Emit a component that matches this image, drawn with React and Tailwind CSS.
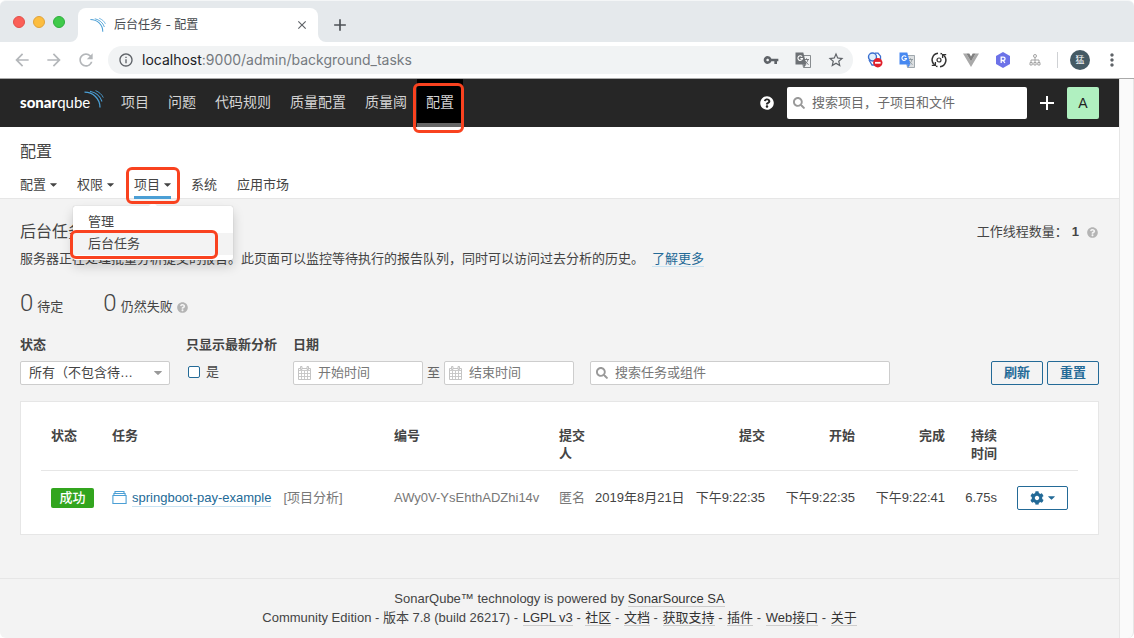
import React from 'react';
import {
  MdArrowBack,
  MdArrowForward,
  MdRefresh,
  MdInfoOutline,
  MdVpnKey,
  MdStarBorder,
  MdMoreVert,
  MdClose,
  MdAdd,
} from 'react-icons/md';
import { FaQuestionCircle, FaSearch, FaCog } from 'react-icons/fa';

function Waves({ className }) {
  return (
    <svg viewBox="0 0 20 18" fill="none" stroke="#4b9fd5" aria-hidden="true" className={className}>
      <path d="M.5 2.2C9 2.2 16 8.500 16 17.500" strokeWidth="1.300" />
      <path d="M6 1.200C11.500 2.300 16.300 6 18 11.500" strokeWidth="1.100" />
      <path d="M11.500.6C15 2 17.800 4.300 19.300 7.600" strokeWidth=".9" />
    </svg>
  );
}

function Caret({ className }) {
  return (
    <svg viewBox="0 0 8 4" fill="currentColor" aria-hidden="true" className={className}>
      <path d="M.6 0h6.800a.4.4 0 0 1 .3.700L4.400 3.800a.6.6 0 0 1-.8 0L.3.700A.4.4 0 0 1 .6 0z" />
    </svg>
  );
}

function Calendar() {
  return (
    <svg width="13" height="14" viewBox="0 0 13 14" fill="none" stroke="#c4c4c4" aria-hidden="true" className="shrink-0">
      <path d="M.5 2.500h12v11H.5z" />
      <path d="M0 4.500h13M3.500 5v8.500M6.500 5v8.500M9.500 5v8.500M.5 7.500h12M.5 10.500h12" strokeWidth=".9" />
      <path d="M2.500.5h1.500v3H2.500zM9 .5h1.500v3H9z" fill="#f3f3f3" />
    </svg>
  );
}

function GTranslate({ front, back, ink }) {
  return (
    <svg width="16" height="16" viewBox="0 0 16 16" aria-hidden="true">
      <path d="M6 3.500h9.500v12H8.500z" fill={back} stroke={ink} strokeWidth=".8" />
      <path d="M9 7.500h5M11.500 6.300v1.200M13 7.500c-.6 2.500-2 4-3.800 5M10 8.800c.8 1.700 2 2.900 3.600 3.700" stroke={ink} strokeWidth=".9" fill="none" />
      <path d="M.5.5h7.800l3 12H.5z" fill={front} />
      <path d="M7.100 4.700A2.300 2.300 0 1 0 7.500 6.500H5.400" stroke="#fff" strokeWidth="1.100" fill="none" />
      <path d="M8 12.500h3.300L9 15.500z" fill={front} />
    </svg>
  );
}

function Mark({ className }) {
  return <span aria-hidden="true" className={`pointer-events-none absolute z-20 rounded-md border-[3px] border-[#f9421f] ${className}`} />;
}

function Foot({ flip }) {
  return (
    <svg width="8" height="8" viewBox="0 0 8 8" fill="#fff" aria-hidden="true" className="self-end">
      <path d={flip ? 'M0 0a8 8 0 0 0 8 8H0z' : 'M8 0a8 8 0 0 1-8 8h8z'} />
    </svg>
  );
}

function BrowserChrome() {
  return (
    <header className="font-['Inter','Noto_Sans_CJK_SC',sans-serif]">
      <div className="flex h-[42px] items-center rounded-t-md border-t border-[#f4f6f7] bg-[#e5e9ec]">
        <div className="flex w-[70px] shrink-0 gap-2 pl-[13px]">
          <span className="size-3 rounded-full border border-[#e2504a] bg-[#fb5f57]" />
          <span className="size-3 rounded-full border border-[#e0a33a] bg-[#fcbd3f]" />
          <span className="size-3 rounded-full border border-[#2eae3e] bg-[#3fca4a]" />
        </div>
        <Foot />
        <div className="flex h-[34px] w-60 shrink-0 items-center self-end rounded-t-lg bg-white pr-[9px] pl-3">
          <Waves className="h-4 w-4" />
          <span className="ml-2 flex-1 text-xs text-[#45494d]">后台任务 - 配置</span>
          <button type="button" aria-label="关闭标签页" className="text-[#5f6368]">
            <MdClose size={14} />
          </button>
        </div>
        <Foot flip />
        <button type="button" aria-label="新标签页" className="ml-1 mt-1.5 text-[#4d5156]">
          <MdAdd size={20} />
        </button>
      </div>
      <div className="flex h-9 items-center bg-white pl-3 pr-3">
        <div className="flex w-24 shrink-0 items-center gap-3 text-[#b4b7ba]">
          <button type="button" aria-label="后退"><MdArrowBack size={20} /></button>
          <button type="button" aria-label="前进"><MdArrowForward size={20} /></button>
          <button type="button" aria-label="重新加载"><MdRefresh size={20} /></button>
        </div>
        <div className="flex h-7 min-w-0 flex-1 items-center rounded-full bg-[#f1f3f4] pr-2 pl-2.5 text-[#5f6368]">
          <MdInfoOutline size={16} />
          <span className="ml-2 flex-1 truncate text-sm text-[#757a7f]">
            <span className="text-[#202124]">localhost</span>:9000/admin/background_tasks
          </span>
          <div className="flex items-center gap-4">
            <MdVpnKey size={16} />
            <GTranslate front="#6d7175" back="#f1f3f4" ink="#6d7175" />
            <MdStarBorder size={18} />
          </div>
        </div>
        <div className="ml-3.5 flex shrink-0 items-center gap-4">
          <svg width="16" height="16" viewBox="0 0 16 16" aria-hidden="true">
            <circle cx="5.500" cy="5" r="4" fill="#dff0fd" stroke="#3b6fd0" strokeWidth="1.400" />
            <path d="M8 1.200h3l2.500 3v3.500M2 8l3 5h4" fill="none" stroke="#3b6fd0" strokeWidth="1.300" />
            <circle cx="10.800" cy="10.800" r="4.700" fill="#e0202c" />
            <path d="M8 9.900h5.600v1.800H8z" fill="#fff" />
          </svg>
          <GTranslate front="#4688f1" back="#dcdfe1" ink="#8b969c" />
          <svg width="16" height="16" viewBox="0 0 16 16" fill="none" stroke="#333" strokeWidth="1.500" aria-hidden="true">
            <path d="M7 1.300A6.600 6.600 0 0 0 3.600 13M9 14.700A6.600 6.600 0 0 0 12.400 3" />
            <path d="M9.500 1.400a6.600 6.600 0 0 1 1.500.5M6.500 14.600a6.600 6.600 0 0 1-1.500-.5" />
            <path d="M.8 13.300h3.600V9.900M15.200 2.700h-3.600v3.400" strokeWidth="1.300" />
            <circle cx="8" cy="8" r="2" strokeWidth="1.200" />
          </svg>
          <svg width="16" height="16" viewBox="0 0 16 16" aria-hidden="true">
            <path d="M0 1.500h3.300L8 9.600l4.700-8.100H16L8 15z" fill="#a9a9a9" />
            <path d="M3.300 1.500h3L8 4.500l1.700-3h3L8 9.600z" fill="#808080" />
          </svg>
          <svg width="16" height="16" viewBox="0 0 16 16" aria-hidden="true">
            <path d="M8 0l7 4v8l-7 4-7-4V4z" fill="#6c72e8" />
            <path d="M6.200 11V5.200h2.200a1.600 1.600 0 0 1 0 3.300H6.200M8.200 8.500L9.900 11" fill="none" stroke="#fff" strokeWidth="1.300" />
          </svg>
          <svg width="16" height="16" viewBox="0 0 16 16" fill="none" stroke="#a3a3a3" aria-hidden="true">
            <circle cx="8" cy="4" r="1.500" />
            <path d="M8 5.500v4.500M4 10V8h8v2" />
            <path d="M3 10.500h2.200v2.500H3zM6.900 10.500h2.200v2.500H6.900zM10.800 10.500H13v2.500h-2.200z" />
          </svg>
        </div>
        <span className="ml-3.5 h-4 w-px bg-[#cfd1d4]" />
        <span className="ml-3 flex size-5 shrink-0 items-center justify-center rounded-full bg-[#455a64] text-[9px] text-white">猛</span>
        <button type="button" aria-label="更多" className="ml-3 text-[#5f6368]">
          <MdMoreVert size={20} />
        </button>
      </div>
    </header>
  );
}

const mainNav = ['项目', '问题', '代码规则', '质量配置', '质量阈', '配置'];

function GlobalNav() {
  return (
    <nav className="flex h-12 items-center bg-[#262626] px-5">
      <a href="#home" aria-label="sonarqube" className="relative block w-[92px] pb-0.5 font-['Lato',sans-serif] text-[15px] leading-6 text-white">
        <span className="font-black">sonar</span>
        <span>qube</span>
        <Waves className="absolute left-16 top-0 h-[18px] w-5" />
      </a>
      <ul className="flex h-full gap-px text-sm text-[#d4d4d4]">
        {mainNav.map((label) => {
          const active = label === '配置';
          return (
            <li key={label} className="relative">
              <a
                href={`#${label}`}
                className={
                  active
                    ? 'flex h-full items-center border-b-4 border-[#666] bg-black px-[9px] pt-0.5'
                    : 'flex h-full items-center border-b-4 border-transparent px-[9px] pt-0.5'
                }
              >
                {label}
              </a>
              {active && <Mark className="-bottom-1.5 -left-1 -right-px top-1" />}
            </li>
          );
        })}
      </ul>
      <div className="ml-auto flex items-center">
        <button type="button" aria-label="帮助" className="text-white"><FaQuestionCircle size={14} /></button>
        <label className="ml-[13px] flex h-8 w-60 items-center rounded-xs bg-white px-1.5 text-[#999]">
          <FaSearch size={12} className="shrink-0" />
          <input
            type="search"
            aria-label="搜索"
            placeholder="搜索项目，子项目和文件"
            className="ml-[7px] min-w-0 flex-1 text-[13px] outline-none placeholder:text-[#6a6a6a]"
          />
        </label>
        <button type="button" aria-label="新建" className="mx-3 text-white">
          <svg width="16" height="16" viewBox="0 0 16 16" fill="none" stroke="currentColor" strokeWidth="2" aria-hidden="true">
            <path d="M8 1v14M1 8h14" />
          </svg>
        </button>
        <button type="button" className="size-8 rounded-xs bg-[#b0f0c0] text-sm text-[#222]">A</button>
      </div>
    </nav>
  );
}

const tabs = [
  { label: '配置', menu: true },
  { label: '权限', menu: true },
  { label: '项目', menu: true, open: true },
  { label: '系统' },
  { label: '应用市场' },
];

function AdminNav() {
  return (
    <div className="flex h-[72px] flex-col border-b border-[#e6e6e6] bg-white px-5 pt-[13px]">
      <h1 className="text-base leading-6">配置</h1>
      <ul className="-mb-px mt-auto flex gap-5">
        {tabs.map((tab) => (
          <li key={tab.label} className="relative">
            <a
              href={`#${tab.label}`}
              className={
                tab.open
                  ? 'flex h-7 items-center gap-1 border-b-[3px] border-[#4b9fd5] pt-0.5'
                  : 'flex h-7 items-center gap-1 border-b-[3px] border-transparent pt-0.5'
              }
            >
              {tab.label}
              {tab.menu && <Caret className="h-1 w-[7px]" />}
            </a>
            {tab.open && (
              <>
                <Mark className="-bottom-[5px] -left-2 -right-[9px] -top-1" />
                <div className="absolute -left-[61px] top-[35px] z-10 w-40 rounded-xs bg-white py-[5px] shadow-[0_6px_12px_rgba(0,0,0,0.18),0_0_1px_rgba(0,0,0,0.3)]">
                  <svg width="10" height="5" viewBox="0 0 10 5" fill="#fff" aria-hidden="true" className="absolute -top-1 left-[75px]">
                    <path d="M0 5l5-5 5 5z" />
                  </svg>
                  <a href="#projects" className="block px-[15px] leading-[22px]">管理</a>
                  <a href="#background-tasks" className="relative block bg-[#f3f3f3] px-[15px] leading-[22px]">
                    后台任务
                    <Mark className="-bottom-1 -left-[3px] -top-[3px] right-[15px]" />
                  </a>
                </div>
              </>
            )}
          </li>
        ))}
      </ul>
    </div>
  );
}

function DateField({ id, label }) {
  return (
    <label htmlFor={id} className="flex h-6 w-[130px] items-center rounded-xs border border-[#cdcdcd] bg-white px-1">
      <Calendar />
      <input id={id} type="text" aria-label={label} placeholder={label} className="ml-[7px] min-w-0 flex-1 outline-none placeholder:text-[#777]" />
    </label>
  );
}

function Filters() {
  return (
    <div className="mt-3.5 flex items-end">
      <div className="w-[150px]">
        <label htmlFor="status" className="block font-bold leading-5">状态</label>
        <div className="relative mt-1.5">
          <select id="status" className="block h-6 w-full appearance-none rounded-xs border border-[#cdcdcd] bg-white px-2 outline-none">
            <option>所有（不包含待…</option>
          </select>
          <Caret className="pointer-events-none absolute right-2 top-2.5 h-1 w-2 text-[#999]" />
        </div>
      </div>
      <div className="ml-4">
        <span className="block font-bold leading-5">只显示最新分析</span>
        <label className="mt-1.5 flex h-6 items-center gap-1.5 pb-0.5 pl-0.5">
          <input type="checkbox" className="size-3 appearance-none rounded-xs border border-[#236a97] bg-white checked:bg-[#236a97]" />
          是
        </label>
      </div>
      <div className="ml-4">
        <span className="block font-bold leading-5">日期</span>
        <div className="mt-1.5 flex items-center gap-1">
          <DateField id="from" label="开始时间" />
          <span className="text-[#666]">至</span>
          <DateField id="to" label="结束时间" />
        </div>
      </div>
      <label htmlFor="task-search" className="ml-4 flex h-6 w-[300px] items-center rounded-xs border border-[#cdcdcd] bg-white px-[5px] text-[#999]">
        <FaSearch size={12} className="shrink-0" />
        <input id="task-search" type="search" aria-label="搜索任务或组件" placeholder="搜索任务或组件" className="ml-[7px] min-w-0 flex-1 outline-none placeholder:text-[#777]" />
      </label>
      <div className="ml-auto flex gap-1">
        <button type="button" className="h-6 w-[52px] rounded-xs border border-[#236a97] font-bold text-[#236a97]">刷新</button>
        <button type="button" className="h-6 w-[52px] rounded-xs border border-[#236a97] font-bold text-[#236a97]">重置</button>
      </div>
    </div>
  );
}

function Tasks() {
  return (
    <div className="mt-4 border border-[#e6e6e6] bg-white px-5 pb-3 pt-2.5">
      <table className="w-full table-fixed leading-[18px]">
        <colgroup>
          <col className="w-[61px]" />
          <col />
          <col className="w-[165px]" />
          <col className="w-[46px]" />
          <col className="w-[90px]" />
          <col className="w-[90px]" />
          <col className="w-[90px]" />
          <col className="w-[90px]" />
          <col className="w-[52px]" />
          <col className="w-[71px]" />
        </colgroup>
        <thead>
          <tr className="border-b border-[#e6e6e6] text-left align-top [&>th]:px-2.5 [&>th]:pb-[7px] [&>th]:pt-[15px]">
            <th>状态</th>
            <th>任务</th>
            <th>编号</th>
            <th>提交人</th>
            <th />
            <th className="text-right">提交</th>
            <th className="text-right">开始</th>
            <th className="text-right">完成</th>
            <th className="text-right">持续时间</th>
            <th />
          </tr>
        </thead>
        <tbody>
          <tr className="whitespace-nowrap [&>td]:px-2.5 [&>td]:pb-3 [&>td]:pt-[15px]">
            <td>
              <span className="block w-[43px] rounded-xs bg-[#32a51e] text-center font-medium leading-5 text-white">成功</span>
            </td>
            <td>
              <div className="flex items-center">
                <svg width="15" height="14" viewBox="0 0 15 14" fill="none" stroke="#4b9fd5" aria-hidden="true" className="mb-0.5 mr-[5px]">
                  <path d="M.9 5.500h13.200v8H.9zM1.900 5.500v-2h11.200v2M3 3.500v-2h9v2" strokeWidth="1.100" />
                </svg>
                <a href="#springboot-pay-example" className="border-b border-[#cae3f2] leading-4 text-[#236a97]">springboot-pay-example</a>
                <span className="ml-3 text-[#777]">[项目分析]</span>
              </div>
            </td>
            <td className="text-[#777]">AWy0V-YsEhthADZhi14v</td>
            <td className="text-[#777]">匿名</td>
            <td className="!px-0">2019年8月21日</td>
            <td className="text-right">下午9:22:35</td>
            <td className="text-right">下午9:22:35</td>
            <td className="text-right">下午9:22:41</td>
            <td className="text-right">6.75s</td>
            <td>
              <button type="button" aria-label="操作" className="flex h-6 w-[51px] items-center justify-center gap-1 rounded-xs border border-[#236a97] text-[#236a97]">
                <FaCog size={14} />
                <Caret className="h-1 w-[7px]" />
              </button>
            </td>
          </tr>
        </tbody>
      </table>
    </div>
  );
}

const footerLinks = ['LGPL v3', '社区', '文档', '获取支持', '插件', 'Web接口', '关于'];

export default function App() {
  return (
    <div className="flex min-h-screen flex-col bg-white">
      <BrowserChrome />
      <div className="flex flex-1 border-t border-[#a9a9a9] font-['Liberation_Sans','Noto_Sans_CJK_SC',sans-serif] text-[13px] text-[#444]">
        <div className="flex min-w-0 flex-1 flex-col rounded-bl-md bg-[#f3f3f3]">
          <GlobalNav />
          <AdminNav />
          <main className="px-5 pt-[21px]">
            <div className="flex items-center justify-between leading-6">
              <h2 className="text-base leading-6">后台任务</h2>
              <div className="flex items-center">
                工作线程数量：
                <span className="ml-1 font-bold">1</span>
                <FaQuestionCircle size={11} className="ml-2 mr-px text-[#b4b4b4]" />
              </div>
            </div>
            <p className="mt-[5px] leading-5">
              服务器正在处理批量分析提交的报告。此页面可以监控等待执行的报告队列，同时可以访问过去分析的历史。
              <a href="#docs" className="ml-2 border-b border-[#cae3f2] text-[#236a97]">了解更多</a>
            </p>
            <div className="mt-5 flex gap-10">
              <div className="flex items-baseline gap-1 leading-7">
                <span className="font-['Roboto',sans-serif] text-2xl font-light leading-7">0</span>待定
              </div>
              <div className="flex items-baseline gap-1 leading-7">
                <span className="font-['Roboto',sans-serif] text-2xl font-light leading-7">0</span>仍然失败
                <FaQuestionCircle size={11} className="relative top-0.5 text-[#b4b4b4]" />
              </div>
            </div>
            <Filters />
            <Tasks />
          </main>
          <footer className="mt-auto border-t border-[#e6e6e6] pb-[11px] pt-2.5 text-center leading-[19px]">
            <div>
              SonarQube™ technology is powered by <a href="#sonarsource" className="border-b border-[#cdcdcd] text-[#333]">SonarSource SA</a>
            </div>
            <div>
              Community Edition - 版本 7.8 (build 26217)
              {footerLinks.map((label) => (
                <React.Fragment key={label}>
                  <span className="mr-px">{' - '}</span>
                  <a href={`#${label}`} className="border-b border-[#cdcdcd] text-[#333]">{label}</a>
                </React.Fragment>
              ))}
            </div>
          </footer>
        </div>
        <div className="w-[15px] shrink-0 rounded-br-md border-l border-r border-[#e6e6e6] bg-[#fafafa]" />
      </div>
    </div>
  );
}
